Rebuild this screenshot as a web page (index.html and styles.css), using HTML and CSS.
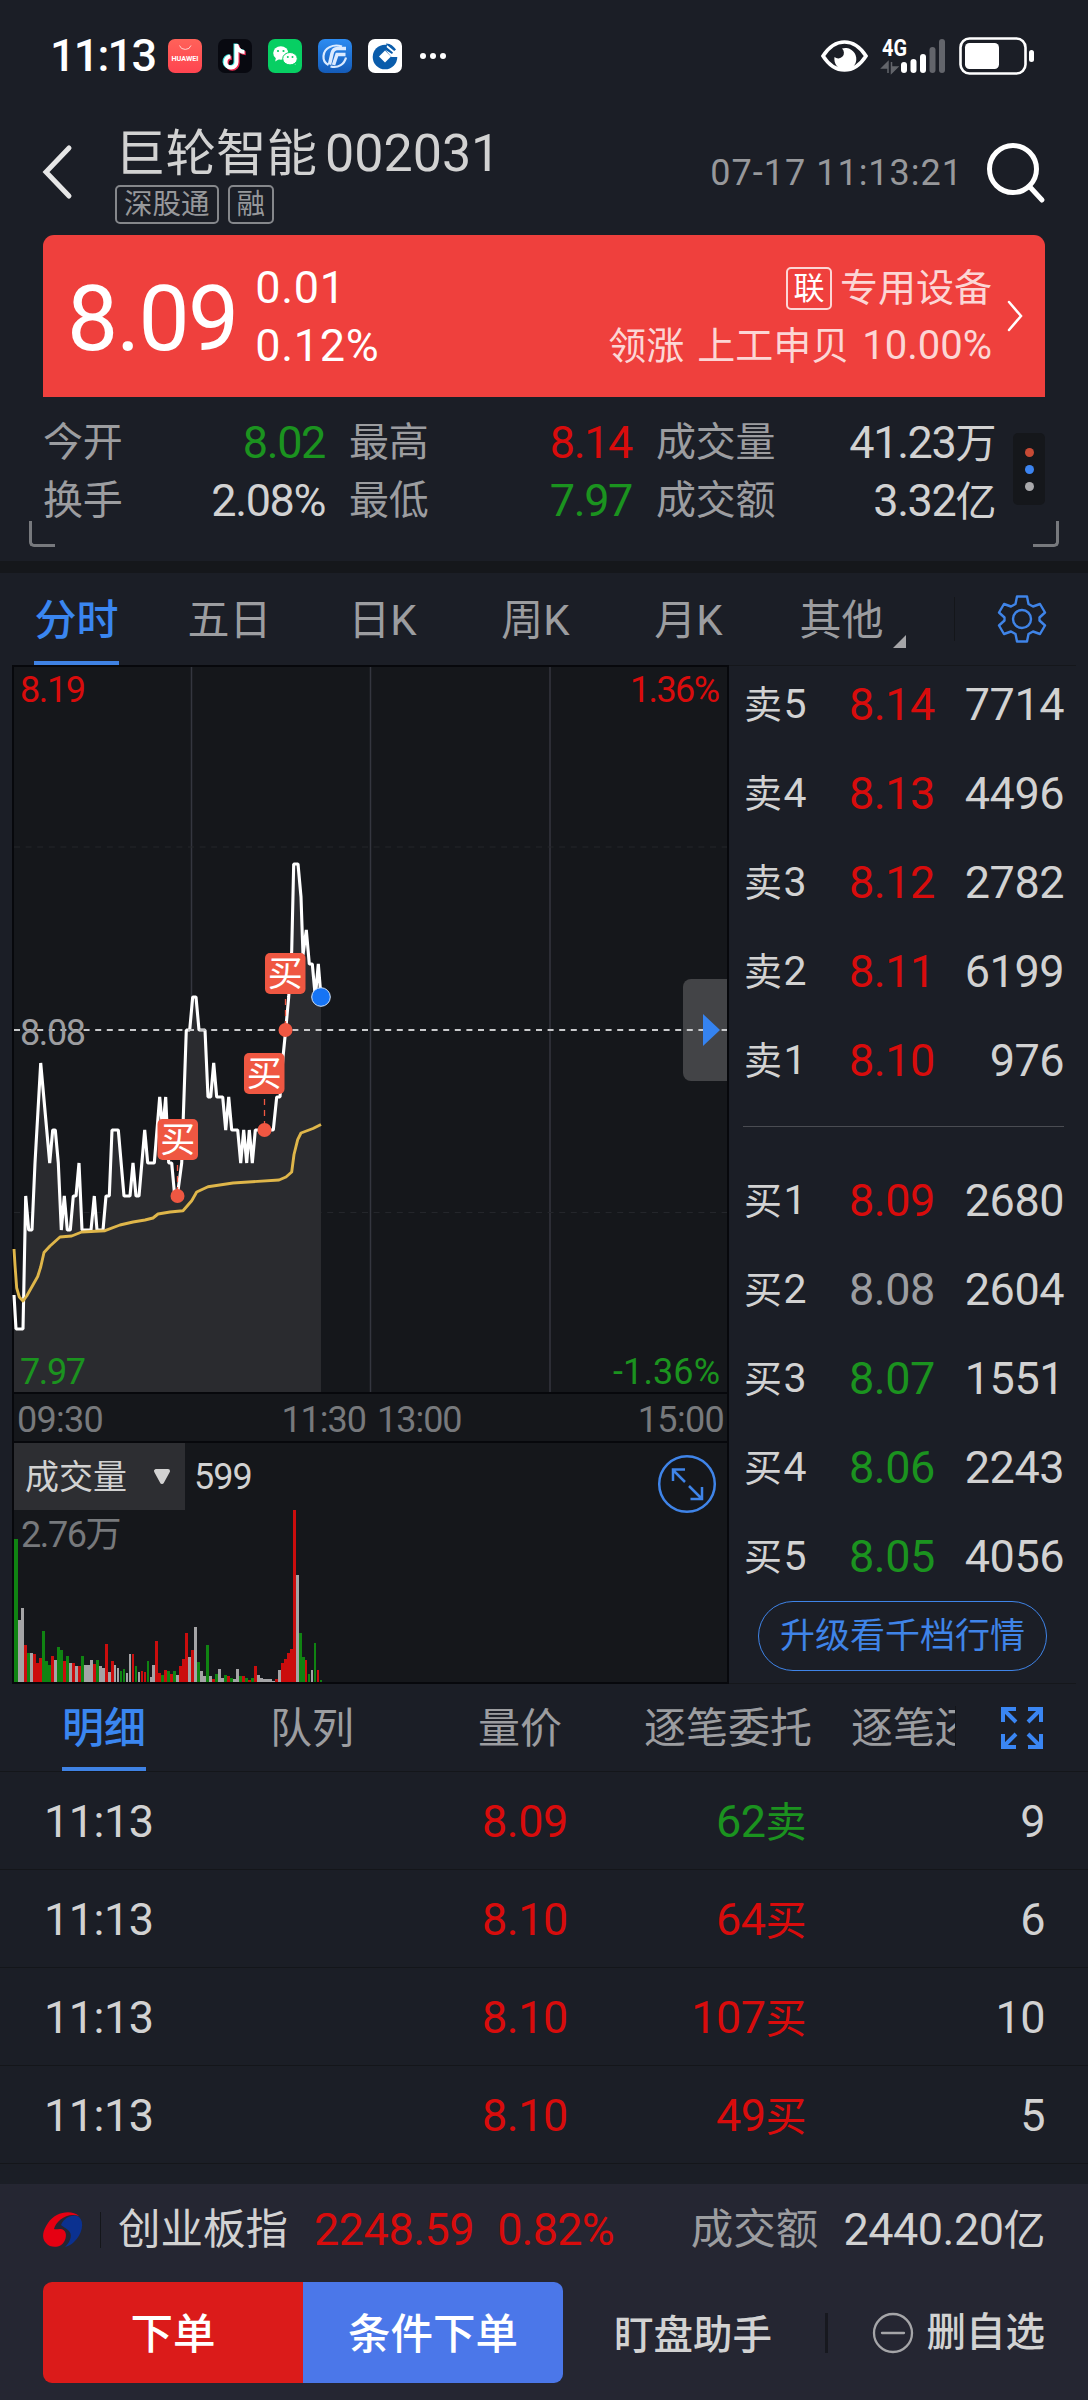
FILE: index.html
```html
<!DOCTYPE html>
<html lang="zh-CN">
<head>
<meta charset="UTF-8">
<meta name="viewport" content="width=device-width, initial-scale=1.0">
<title>巨轮智能 002031</title>
<link rel="stylesheet" href="styles.css">
</head>
<body>

<div class="page">
  <div class="status-bar">
    <span class="clock">11:13</span>
    <div class="apps">
      <svg width="34" height="34" viewBox="0 0 34 34">
        <defs><linearGradient id="hw" x1="0" y1="0" x2="0" y2="1"><stop offset="0" stop-color="#ff6259"/><stop offset="1" stop-color="#ff4450"/></linearGradient></defs>
        <rect width="34" height="34" rx="7" fill="url(#hw)"/>
        <path d="M11.500 6.500a6 5.500 0 0 0 11.500 0" fill="none" stroke="#ffd0cd" stroke-width="1"/>
        <text x="17" y="22" text-anchor="middle" textLength="27" lengthAdjust="spacingAndGlyphs" font-size="7" font-weight="700" fill="#fff">HUAWEI</text>
      </svg>
      <svg width="34" height="34" viewBox="0 0 34 34">
        <rect width="34" height="34" rx="7" fill="#080910"/>
        <g fill="none" stroke-width="4">
          <path d="M18.500 5v18a5.500 5.500 0 1 1-6-5.500M18.500 6c.5 4 4 7 8 7" stroke="#ef2b53" transform="translate(1.200 1.200)"/>
          <path d="M18.500 5v18a5.500 5.500 0 1 1-6-5.500M18.500 6c.5 4 4 7 8 7" stroke="#39e5e3" transform="translate(-1 -.5)"/>
          <path d="M18.500 5v18a5.500 5.500 0 1 1-6-5.500M18.500 6c.5 4 4 7 8 7" stroke="#fff"/>
        </g>
      </svg>
      <svg width="34" height="34" viewBox="0 0 34 34">
        <rect width="34" height="34" rx="7" fill="#07cf63"/>
        <ellipse cx="12.800" cy="14" rx="7.600" ry="6.700" fill="#fff"/>
        <path d="M8 18l-.8 4.500 4-2.500zM25 23l2.500 3.200-1-4.500z" fill="#fff"/>
        <ellipse cx="22" cy="19.700" rx="7.300" ry="6.200" fill="#fff" stroke="#07cf63"/>
        <g fill="#07cf63"><circle cx="10" cy="12" r="1.100"/><circle cx="15.500" cy="12" r="1.100"/><circle cx="19.800" cy="18" r="1"/><circle cx="24.500" cy="18" r="1"/></g>
      </svg>
      <svg width="34" height="34" viewBox="0 0 34 34">
        <defs><linearGradient id="gf" x1="0" y1="0" x2="0" y2="1"><stop offset="0" stop-color="#2d8cf2"/><stop offset="1" stop-color="#145bb8"/></linearGradient></defs>
        <rect width="34" height="34" rx="7" fill="url(#gf)"/>
        <g fill="none" stroke="#dcebff">
          <path d="M24 7.500C15 4.500 6 9 5.500 17c-.3 4 2 7.500 5 9" stroke-width="2.200"/>
          <path d="M28 9.500H19.500c-3.500 0-4.800 2-5.500 5l-2.500 11" stroke-width="3.500"/>
          <path d="M27.500 15.500H19l-3.500 10.500" stroke-width="3.500"/>
          <path d="M12.500 27.500c8 2 14-2.500 15.500-9" stroke-width="2.200"/>
        </g>
      </svg>
      <svg width="34" height="34" viewBox="0 0 34 34">
        <rect width="34" height="34" rx="7" fill="#fff"/>
        <circle cx="17" cy="18" r="12.300" fill="#0a5cab"/>
        <path d="M17 11.500l6 6-6 6-6-6z" fill="#fff"/>
        <path d="M20 4l10 9v5h-6.500l-6-7z" fill="#fff"/>
        <path d="M18.500 4.500c4 .3 7 2.500 9.500 6l-1.800 1.500-8.500-7zM16 6l9 7.500-1 1.500-8-5z" fill="#0a5cab"/>
      </svg>
      <svg class="dots" width="28" height="8" viewBox="0 0 28 8" fill="#fff"><circle cx="4" cy="4" r="3"/><circle cx="14" cy="4" r="3"/><circle cx="24" cy="4" r="3"/></svg>
    </div>
    <svg class="signals" width="216" height="42" viewBox="820 35 216 42">
      <path d="M823 56q9-14 21.500-14T866 56q-9 14-21.500 14T823 56z" fill="none" stroke="#fff" stroke-width="3.600"/>
      <path d="M842 48.500a11 11 0 1 1-7.500 8.500 5 5 0 1 0 7.500-8.500z" fill="#fff"/>
      <text x="882" y="56" font-size="24" font-weight="700" textLength="25" lengthAdjust="spacingAndGlyphs" fill="#fff">4G</text>
      <path d="M888 73V62l-6 6h6zM891.500 62v11l6-6h-6z" fill="#63656b" stroke="#63656b" stroke-width="1.500"/>
      <g fill="#fff"><rect x="901" y="62" width="6" height="11" rx="3"/><rect x="910.500" y="59" width="6" height="14" rx="3"/><rect x="920" y="54" width="6" height="19" rx="3"/></g>
      <g fill="#63656b"><rect x="929.500" y="47" width="6" height="26" rx="3"/><rect x="939" y="39" width="6" height="34" rx="3"/></g>
      <rect x="960.500" y="38.500" width="65" height="35" rx="9" fill="none" stroke="#fff" stroke-width="2.600"/>
      <rect x="965" y="43" width="34" height="26" rx="4.500" fill="#fff"/>
      <rect x="1029" y="50" width="5" height="12" rx="2.500" fill="#fff"/>
    </svg>
  </div>

  <div class="header">
    <svg class="back" width="32" height="56" viewBox="0 0 32 56"><path d="M28 4L5 28l23 24" fill="none" stroke="#e6e6e6" stroke-width="5" stroke-linecap="round"/></svg>
    <div class="stock">
      <div class="stock-name">巨轮智能<span class="code">002031</span></div>
      <div class="tags"><span>深股通</span><span>融</span></div>
    </div>
    <span class="datetime">07-17 11:13:21</span>
    <svg class="search" width="62" height="62" viewBox="0 0 62 62"><g fill="none" stroke="#fff" stroke-width="5"><circle cx="28" cy="28" r="23.500"/><path d="M44.500 45.500L57 59" stroke-linecap="round"/></g></svg>
  </div>

  <div class="price-card">
    <span class="price">8.09</span>
    <div class="change"><div>0.01</div><div>0.12%</div></div>
    <div class="sector">
      <div><span class="link-tag">联</span>专用设备</div>
      <div class="leader">领涨<span class="leader-name">上工申贝</span><span class="num">10.00%</span></div>
    </div>
    <svg class="arrow" width="18" height="34" viewBox="0 0 18 34"><path d="M3 3l12 14L3 31" fill="none" stroke="#fff" stroke-width="2.500" stroke-linecap="round"/></svg>
  </div>

  <div class="stats">
    <div class="stat"><label>今开</label><b class="green">8.02</b></div>
    <div class="stat"><label>最高</label><b class="red">8.14</b></div>
    <div class="stat"><label>成交量</label><b>41.23<i>万</i></b></div>
    <div class="stat"><label>换手</label><b>2.08%</b></div>
    <div class="stat"><label>最低</label><b class="green">7.97</b></div>
    <div class="stat"><label>成交额</label><b>3.32<i>亿</i></b></div>
    <div class="more"><span></span><span></span><span></span></div>
    <div class="corner corner-left"></div>
    <div class="corner corner-right"></div>
  </div>

  <div class="chart-tabs">
    <div class="tab active"><span>分时</span></div>
    <div class="tab"><span>五日</span></div>
    <div class="tab"><span>日K</span></div>
    <div class="tab"><span>周K</span></div>
    <div class="tab"><span>月K</span></div>
    <div class="tab other"><span>其他</span></div>
    <div class="tab-tool">
      <svg width="50" height="50" viewBox="0 0 50 50"><g fill="none" stroke="#3f84e8" stroke-width="2.400" stroke-linejoin="round">
        <circle cx="25" cy="25" r="9"/>
        <path d="M20 2.500h10l1.500 7.500 4.500 2.500 7-2.500 5 8.500-5.500 5v3l5.500 5-5 8.500-7-2.500-4.500 2.500-1.500 7.500H20l-1.500-7.500-4.500-2.500-7 2.500-5-8.500 5.500-5v-3L2 18.500 7 10l7 2.500 4.500-2.500z"/>
      </g></svg>
    </div>
  </div>

  <div class="market">
    <div class="charts">
      <svg class="minute" width="713" height="725" viewBox="0 0 713 725">
        <g stroke="#34363f" stroke-width="1.500"><path d="M177.500 0v725M356.500 0v725M536 0v725"/></g>
        <g stroke="#24262b" stroke-width="1.200" stroke-dasharray="6 5.600"><path d="M0 180h713M0 545.500h713"/></g>
        <path d="M0 628L2 662H9L11.700 529 14.700 563H18L21 496 26.700 396 35.700 496 38.700 463H41.300L44.300 496 47.300 563 50.300 529 53.300 563H56.300L59.300 529H62L65 496 68 563H77L80.300 529 83 563H89L92 529H95.300L98 463H104.300L110 529H116L119 496 122 529H125L130.700 463 133.700 496H140.300L145.700 430 148.700 463 151.700 430 154.700 496H157.700L160.700 529H163.300L167.700 496 172.300 363H175.700L178.700 330H182L185 363H191L194 430H196.700L199.700 396 202.700 430H208.700L211.700 463 214.700 430 217.700 463H223.700L226.700 496 229.700 463 232.700 496 235.300 463 238.300 496 241.300 463H259.300L262.700 430H266L269 390 271.700 363 274.700 330 277.700 284 279.700 197H284L287 230 289 288 292.300 263 295.300 297H298.300L301.300 330 304.300 297 307 330V725H0z" fill="#2a2b2f"/>
        <path d="M0 628L2 662H9L11.700 529 14.700 563H18L21 496 26.700 396 35.700 496 38.700 463H41.300L44.300 496 47.300 563 50.300 529 53.300 563H56.300L59.300 529H62L65 496 68 563H77L80.300 529 83 563H89L92 529H95.300L98 463H104.300L110 529H116L119 496 122 529H125L130.700 463 133.700 496H140.300L145.700 430 148.700 463 151.700 430 154.700 496H157.700L160.700 529H163.300L167.700 496 172.300 363H175.700L178.700 330H182L185 363H191L194 430H196.700L199.700 396 202.700 430H208.700L211.700 463 214.700 430 217.700 463H223.700L226.700 496 229.700 463 232.700 496 235.300 463 238.300 496 241.300 463H259.300L262.700 430H266L269 390 271.700 363 274.700 330 277.700 284 279.700 197H284L287 230 289 288 292.300 263 295.300 297H298.300L301.300 330 304.300 297 307 330" fill="none" stroke="#fff" stroke-width="3.100" stroke-linejoin="bevel"/>
        <path d="M0 582L1 598 2.700 621 5.300 630 9 634 12.700 629 23.700 609.500 26.700 600 30 585.500 36 579 46 570 57.700 569 67.700 565 91 563.700 106 558 119 555 131 553 139 551 144 547 156 545 169 543.700 177.700 533.700 182.700 525 194 519.700 219 516 265 513 272 510 277.700 505 280 487.500 283.700 472.700 287 466 299 461.500 307 457.500" fill="none" stroke="#dfb64a" stroke-width="2.900" stroke-linejoin="round"/>
        <path d="M713 312h-36a8 8 0 0 0-8 8v86a8 8 0 0 0 8 8h36z" fill="#434447"/>
        <path d="M0 363h713" stroke="#c9cacc" stroke-width="2" stroke-dasharray="6 5.600"/>
        <path d="M689 347l17 16-17 16z" fill="#3583f0"/>
        <g stroke="#ef5742" stroke-width="1.300" stroke-dasharray="6 5"><path d="M163.500 498v28M250.500 432v28M271.500 332v28"/></g>
        <g fill="#ef5742">
          <circle cx="163.500" cy="529" r="7"/><circle cx="250.500" cy="463" r="7"/><circle cx="271.500" cy="363" r="7"/>
          <rect x="143.500" y="452" width="40.500" height="41" rx="5"/>
          <rect x="230" y="386" width="40.500" height="41" rx="5"/>
          <rect x="251" y="286" width="40.500" height="41" rx="5"/>
        </g>
        <g class="badge"><text x="163.800" y="485">买</text><text x="250.300" y="419">买</text><text x="271.300" y="319">买</text></g>
        <circle cx="307" cy="330" r="9.300" fill="#1674f5" stroke="#cfe2fb" stroke-width="1"/>
        <g class="scale">
          <text x="6" y="35" textLength="66" class="red">8.19</text>
          <text x="706" y="35" textLength="90" text-anchor="end" class="red">1.36%</text>
          <text x="6" y="377.500" textLength="66" class="gray">8.08</text>
          <text x="6" y="717" textLength="66" class="green">7.97</text>
          <text x="706" y="717" textLength="107" text-anchor="end" class="green">-1.36%</text>
        </g>
      </svg>
      <div class="time-axis"><span>09:30</span><span class="noon">11:30 13:00</span><span>15:00</span></div>
      <div class="volume">
        <div class="volume-head">
          <div class="select">成交量<svg width="18" height="16" viewBox="0 0 18 16"><path d="M3 2h12L9 13z" fill="#d2d2d2" stroke="#d2d2d2" stroke-width="4" stroke-linejoin="round"/></svg></div>
          <span class="volume-now">599</span>
          <svg class="zoom" width="60" height="60" viewBox="0 0 60 60"><g fill="none" stroke="#3f84e8" stroke-width="2.500">
            <circle cx="30" cy="30" r="27.800"/>
            <path d="M28 28L15.500 15.500M16 27V15.500h12M32 32l13 13M45 33v12H33.500"/>
          </g></svg>
        </div>
        <div class="volume-max">2.76万</div>
        <div class="bars" id="bars"></div>
      </div>
    </div>

    <div class="order-book">
      <div class="quotes">
        <div class="quote"><span><i>卖</i>5</span><span class="red">8.14</span><span>7714</span></div>
        <div class="quote"><span><i>卖</i>4</span><span class="red">8.13</span><span>4496</span></div>
        <div class="quote"><span><i>卖</i>3</span><span class="red">8.12</span><span>2782</span></div>
        <div class="quote"><span><i>卖</i>2</span><span class="red">8.11</span><span>6199</span></div>
        <div class="quote"><span><i>卖</i>1</span><span class="red">8.10</span><span>976</span></div>
      </div>
      <div class="quotes buy">
        <div class="quote"><span><i>买</i>1</span><span class="red">8.09</span><span>2680</span></div>
        <div class="quote"><span><i>买</i>2</span><span class="gray">8.08</span><span>2604</span></div>
        <div class="quote"><span><i>买</i>3</span><span class="green">8.07</span><span>1551</span></div>
        <div class="quote"><span><i>买</i>4</span><span class="green">8.06</span><span>2243</span></div>
        <div class="quote"><span><i>买</i>5</span><span class="green">8.05</span><span>4056</span></div>
      </div>
      <div class="upgrade">升级看千档行情</div>
    </div>
  </div>

  <div class="detail-tabs">
    <div class="detail-list">
      <div class="tab active"><span>明细</span></div>
      <div class="tab"><span>队列</span></div>
      <div class="tab"><span>量价</span></div>
      <div class="tab"><span>逐笔委托</span></div>
      <div class="tab last"><span>逐笔还原</span></div>
    </div>
    <div class="tab-tool">
      <svg width="42" height="42" viewBox="0 0 42 42"><g fill="none" stroke="#3a86f3" stroke-width="4">
        <path d="M15 15L3 3M2 15V2h13M27 15L39 3M27 2h13v13M15 27L3 39M2 27v13h13M27 27l12 12M40 27v13H27"/>
      </g></svg>
    </div>
  </div>

  <div class="trades">
    <div class="trade"><span>11:13</span><span class="red">8.09</span><span class="green">62<i>卖</i></span><span>9</span></div>
    <div class="trade"><span>11:13</span><span class="red">8.10</span><span class="red">64<i>买</i></span><span>6</span></div>
    <div class="trade"><span>11:13</span><span class="red">8.10</span><span class="red">107<i>买</i></span><span>10</span></div>
    <div class="trade"><span>11:13</span><span class="red">8.10</span><span class="red">49<i>买</i></span><span>5</span></div>
  </div>

  <div class="footer">
    <div class="index">
      <svg width="40" height="38" viewBox="0 0 40 38">
        <path d="M36 5C28-2 12 1 5 12c-5 7-7 15-2 20 5 6 16 5 19-3 2-5 1-10-4-11-3-.5-5 1-7 0C13 10 24 1 36 5z" fill="#e60012"/>
        <path d="M18 14c3-8 13-12 18-8 6 5 3 18-5 25-3 3-6 4-9 5 6-6 8-13 3-17-2-2-5-3-7-5z" fill="#0b3190"/>
      </svg>
      <span class="index-name">创业板指</span>
      <span class="index-value red">2248.59</span>
      <span class="index-rate red">0.82%</span>
      <span class="index-label">成交额</span>
      <span class="index-amount">2440.20<i>亿</i></span>
    </div>
    <div class="actions">
      <button class="order">下单</button>
      <button class="cond-order">条件下单</button>
      <span class="assistant">盯盘助手</span>
      <span class="remove"><svg width="42" height="42" viewBox="0 0 42 42"><g fill="none" stroke="#a5a5a8" stroke-width="2.300"><circle cx="21" cy="21" r="19"/><path d="M10 21h22" stroke-linecap="round"/></g></svg>删自选</span>
    </div>
  </div>
</div>

<script>
  // One bar per minute: colour letter (g down, r up, w flat) and height
  var volumes = "g143,w62,w74,r37,g29,w29,r28,r19,r24,g51,g21,g17,r26,w22,g35,g32,r21,g26,w19,r19,w16,r16,g26,w17,w17,w22,r18,g22,w16,w14,r38,w10,r21,w17,w14,g11,g13,w9,w28,r28,g16,w10,r11,r10,g21,w5,w17,r41,r9,g7,r12,g11,r8,g11,w7,r16,r23,r49,w25,r32,w55,g20,w11,w6,g37,w6,r3,g8,w13,w4,g7,r6,g4,w3,w13,g6,r6,g4,r2,g4,r16,w7,w4,w3,w3,w3,w1,r3,w12,r19,r23,r29,r33,r172,w107,g49,g25,r22,g8,w12,g39,r12,g2";
  var bars = document.getElementById("bars");

  volumes.split(",").forEach(function(item) {
    var bar = document.createElement("span");
    bar.className = "bar bar-" + item.charAt(0);
    bar.style.height = item.slice(1) + "px";
    bars.appendChild(bar);
  });
</script>

</body>
</html>
```
FILE: styles.css
```css
* {
  box-sizing: border-box;
}
body {
  margin: 0;
  background: #1b1e26;
  color: #d2d2d2;
  font-family: Roboto, "Noto Sans CJK SC", sans-serif;
}
svg {
  display: block;
  flex: none;
  overflow: visible;
}
i {
  font-style: normal;
}
.page {
  width: 1088px;
  height: 2400px;
  overflow: hidden;
}
.red {
  color: #d80c0c;
  fill: #d80c0c;
}
.green {
  color: #1b931f;
  fill: #1b931f;
}
.gray {
  color: #9c9da0;
  fill: #9c9da0;
}

/* status bar */
.status-bar {
  display: flex;
  align-items: center;
  height: 112px;
  padding: 0 52px 0 50px;
}
.clock {
  width: 118px;
  font-size: 45px;
  font-weight: 500;
  line-height: 56px;
  letter-spacing: -1.800px;
  color: #fff;
}
.apps {
  display: flex;
  align-items: center;
  gap: 16px;
}
.dots {
  margin-left: 1px;
}
.signals {
  margin-left: auto;
}

/* header */
.header {
  display: flex;
  height: 123px;
  padding: 0 41px;
}
.back {
  margin-top: 32px;
}
.stock {
  margin-left: 42px;
}
.stock-name {
  display: flex;
  align-items: center;
  height: 73px;
  padding-top: 10px;
  font-size: 50.500px;
  line-height: 60px;
}
.code {
  margin-left: 8px;
  font-size: 52px;
}
.tags {
  display: flex;
  gap: 9px;
}
.tags span {
  height: 39px;
  padding: 0 7px;
  border: 2px solid #85878b;
  border-radius: 5px;
  font-size: 28.500px;
  line-height: 36px;
  color: #97989b;
}
.datetime {
  margin-left: auto;
  margin-top: 36px;
  font-size: 36px;
  line-height: 50px;
  letter-spacing: 1px;
  color: #97989b;
}
.search {
  margin: 29px 0 0 22px;
}

/* red price card */
.price-card {
  display: flex;
  height: 162px;
  margin: 0 43px;
  padding: 0 21px 0 24px;
  background: #ef403d;
  border-radius: 11px 11px 0 0;
  color: #fff;
}
.price {
  font-size: 91px;
  line-height: 168px;
  letter-spacing: -1.800px;
}
.change {
  margin-left: 18px;
  padding-top: 24px;
  font-size: 45px;
  line-height: 58px;
  letter-spacing: 0.7px;
}
.sector {
  margin-left: auto;
  padding-top: 24px;
  text-align: right;
  font-size: 38px;
  line-height: 58px;
  color: #fcd6d5;
}
.sector div {
  display: flex;
  justify-content: flex-end;
  align-items: center;
}
.link-tag {
  width: 46px;
  height: 43px;
  margin-right: 8px;
  border: 2px solid #fcd6d5;
  border-radius: 5px;
  font-size: 31px;
  line-height: 40px;
  text-align: center;
  color: #fff;
}
.leader-name {
  margin: 0 13px 0 13px;
}
.leader .num {
  font-size: 40px;
}
.arrow {
  margin: 64px 0 0 14px;
}

/* open / high / low figures */
.stats {
  position: relative;
  display: grid;
  grid-template-columns: 282px 283px 339px 32px;
  grid-template-rows: 58px 58px;
  column-gap: 24px;
  height: 164px;
  padding: 17px 43px 0;
}
.stat {
  display: flex;
  justify-content: space-between;
  line-height: 58px;
}
.stat label {
  font-size: 40px;
  letter-spacing: -0.3px;
  color: #9c9da0;
}
.stat b {
  font-size: 45px;
  font-weight: 400;
  letter-spacing: -1.400px;
}
.stat i {
  font-size: 41px;
}
.more {
  grid-column: 4;
  grid-row: 1 / 3;
  display: flex;
  flex-direction: column;
  align-items: center;
  justify-content: center;
  gap: 8px;
  width: 32px;
  height: 72px;
  margin: 19px 0 0 -6px;
  background: #15171b;
  border-radius: 5px;
}
.more span {
  width: 9px;
  height: 9px;
  border-radius: 50%;
  background: #c74a35;
}
.more span:nth-child(2) {
  background: #3c84f0;
}
.more span:nth-child(3) {
  background: #a9a9ac;
}
.corner {
  position: absolute;
  bottom: 14px;
  width: 26px;
  height: 26px;
  border-bottom: 3px solid #77797d;
}
.corner-left {
  left: 29px;
  border-left: 3px solid #77797d;
  border-bottom-left-radius: 5px;
}
.corner-right {
  right: 29px;
  border-right: 3px solid #77797d;
  border-bottom-right-radius: 5px;
}

/* tabs */
.chart-tabs {
  display: flex;
  height: 104px;
  border-top: 12px solid #15171b;
}
.tab {
  flex: none;
  display: flex;
  justify-content: center;
  font-size: 42px;
  color: #9c9da0;
}
.chart-tabs .tab {
  width: 153px;
}
.chart-tabs .tab span {
  height: 92px;
  line-height: 96px;
}
.tab.active {
  color: #3a86f0;
  font-weight: 500;
}
.tab.active span {
  border-bottom: 4px solid #3f82e4;
}
.other {
  align-items: center;
  position: relative;
}
.other::after {
  content: "";
  position: absolute;
  right: 12px;
  top: 62px;
  border-left: 13px solid transparent;
  border-bottom: 13px solid #a5a5a8;
}
.tab-tool {
  display: flex;
  align-items: center;
  flex: 1;
  height: 44px;
  margin: 24px 0 0 36px;
  padding-left: 42px;
  border-left: 1px solid #14161a;
}

/* charts */
.market {
  display: flex;
  height: 1019px;
}
.charts {
  width: 717px;
  height: 1019px;
  margin-left: 12px;
  border: 2px solid #07080c;
  background: #15171b;
}
.badge text {
  font-size: 35px;
  fill: #fff;
  text-anchor: middle;
}
.scale text {
  font-size: 36px;
}
.time-axis {
  display: flex;
  justify-content: space-between;
  height: 51px;
  padding: 0 3px;
  border-top: 2px solid #07080c;
  border-bottom: 2px solid #07080c;
  font-size: 36px;
  line-height: 53px;
  letter-spacing: -0.7px;
  color: #77797c;
}
.noon {
  margin-left: 2px;
  word-spacing: 3px;
  letter-spacing: -1px;
}
.volume {
  height: 239px;
  display: flex;
  flex-direction: column;
}
.volume-head {
  display: flex;
  height: 67px;
  font-size: 34px;
  line-height: 68px;
}
.select {
  display: flex;
  align-items: center;
  justify-content: space-between;
  width: 171px;
  padding: 0 14px 0 11px;
  background: #2d2e32;
}
.volume-now {
  margin-left: 9px;
  font-size: 36px;
  letter-spacing: -1px;
}
.zoom {
  margin: 11px 10px 0 auto;
}
.volume-max {
  padding-left: 7px;
  height: 0;
  font-size: 36px;
  line-height: 50px;
  letter-spacing: -1.400px;
  color: #77797c;
}
.bars {
  display: flex;
  align-items: flex-end;
  flex: 1;
}
.bar {
  flex: none;
  width: 2.800px;
  margin-right: 0.190px;
}
.bar:first-child {
  width: 4px;
}
.bar-g {
  background: #108412;
}
.bar-r {
  background: #cb0d0d;
}
.bar-w {
  background: #a4a4a6;
}

/* order book */
.order-book {
  flex: 1;
  border-top: 1px solid #15171b;
  border-bottom: 1px solid #15171b;
  margin-right: 12px;
}
.quotes {
  margin: -6px 12px 0 14px;
  padding-bottom: 21px;
}
.quotes.buy {
  margin-top: 0;
  padding: 29px 0 0;
  border-top: 1.500px solid #4a4c52;
}
.quote {
  display: grid;
  grid-template-columns: 105px 90px 1fr;
  height: 89px;
  line-height: 89px;
  padding: 0 0 0 1px;
  font-size: 45px;
  letter-spacing: -0.5px;
}
.quote span:first-child {
  font-size: 41px;
}
.quote span:last-child {
  text-align: right;
}
.quote i {
  margin-right: 2px;
  font-size: 38px;
}
.upgrade {
  width: 289px;
  height: 70px;
  margin-left: 29px;
  border: 1.500px solid #3f84e8;
  border-radius: 35px;
  font-size: 35px;
  line-height: 69px;
  text-align: center;
  color: #3f84e8;
}

/* trade detail */
.detail-tabs {
  display: flex;
  height: 88px;
  border-bottom: 1px solid #14161a;
}
.detail-list {
  display: flex;
  width: 955px;
  overflow: hidden;
}
.detail-list .tab {
  width: 208px;
}
.detail-list .tab span {
  height: 87px;
  line-height: 90px;
}
.detail-list .last {
  justify-content: flex-start;
  padding-left: 19px;
}
.detail-tabs .tab-tool {
  margin: 22px 0 0;
  padding-left: 45px;
}
.trade {
  display: grid;
  grid-template-columns: 438px 150px 212px 1fr;
  height: 98px;
  padding: 0 43px 0 44px;
  border-bottom: 1px solid #14161a;
  font-size: 45px;
  line-height: 99px;
  letter-spacing: -0.5px;
}
.trade span:nth-child(3),
.trade span:nth-child(4) {
  text-align: right;
}
.trade span:nth-child(3) {
  padding-right: 38px;
}
.trade i {
  font-size: 41px;
}

/* footer */
.footer {
  height: 217px;
  margin-top: 20px;
  padding: 0 43px;
  background: #252632;
}
.index {
  display: flex;
  align-items: center;
  height: 98px;
  padding-bottom: 6px;
  font-size: 45px;
  line-height: 92px;
  letter-spacing: -0.5px;
}
.index-name {
  margin-left: 17px;
  padding-left: 17px;
  border-left: 1px solid #14161a;
  font-size: 42.500px;
  line-height: 36px;
  letter-spacing: 0;
}
.index-value {
  margin-left: 26px;
}
.index-rate {
  margin-left: 23px;
  letter-spacing: -0.8px;
}
.index-label {
  margin-left: auto;
  font-size: 42.500px;
  letter-spacing: 0;
  color: #9c9da0;
}
.index-amount {
  margin-left: 25px;
}
.index-amount i {
  font-size: 42px;
}
.actions {
  display: flex;
  align-items: center;
  height: 101px;
  font-size: 39.500px;
  font-weight: 500;
}
.actions button {
  width: 260px;
  height: 101px;
  padding: 0 0 5px;
  border: none;
  font-family: inherit;
  font-size: 42.500px;
  font-weight: 500;
  color: #fff;
}
.actions .order {
  background: #db1b1a;
  border-radius: 9px 0 0 9px;
}
.actions .cond-order {
  background: #4b77e9;
  border-radius: 0 9px 9px 0;
}
.assistant {
  margin-left: 51px;
  padding-bottom: 3px;
}
.remove {
  display: flex;
  align-items: center;
  gap: 13px;
  height: 40px;
  margin-left: auto;
  padding-left: 44px;
  border-left: 3px solid #17181f;
  line-height: 36px;
}
```
